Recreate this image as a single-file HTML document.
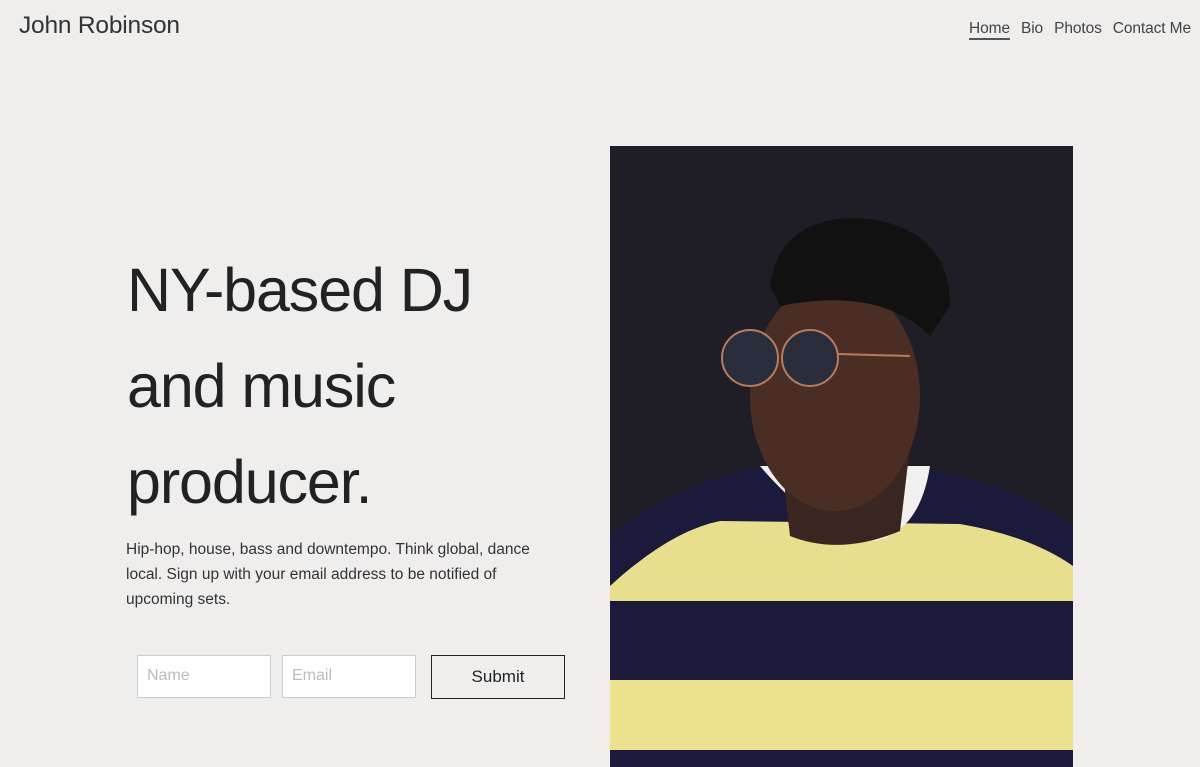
<!DOCTYPE html>
<html><head><meta charset="utf-8"><style>
body{margin:0;width:1200px;height:767px;background:#f0eeed;overflow:hidden;font-family:"Liberation Sans",sans-serif;position:relative;color:#222}
.logo{position:absolute;left:19px;top:12px;font-size:24.5px;color:#333;letter-spacing:-0.2px}
nav{position:absolute;top:20px;right:9px;font-size:15.5px;color:#444;letter-spacing:-0.1px}
nav span{margin-left:11px}
nav .a{border-bottom:2px solid #555;padding-bottom:1px}
h1{position:absolute;left:127px;top:242px;margin:0;font-weight:normal;font-size:61px;line-height:96px;color:#222;letter-spacing:-1.1px}
p{position:absolute;left:126px;top:537px;margin:0;width:430px;font-size:15.5px;line-height:25px;color:#333}
.in{position:absolute;top:655px;width:134px;height:43px;box-sizing:border-box;background:#fff;border:1px solid #ccc;color:#bbb;font-size:16px;padding:11px 9px}
.btn{position:absolute;left:431px;top:655px;width:134px;height:44px;box-sizing:border-box;border:1.5px solid #222;text-align:center;line-height:41px;font-size:17px;color:#222}
svg{position:absolute;left:610px;top:146px}
</style></head><body>
<div class="logo">John Robinson</div>
<nav><span class="a">Home</span><span>Bio</span><span>Photos</span><span>Contact Me</span></nav>
<h1>NY-based DJ<br>and music<br>producer.</h1>
<p>Hip-hop, house, bass and downtempo. Think global, dance local. Sign up with your email address to be notified of upcoming sets.</p>
<div class="in" style="left:137px">Name</div>
<div class="in" style="left:282px">Email</div>
<div class="btn">Submit</div>
<svg width="463" height="621" viewBox="0 0 463 621">
<rect width="463" height="621" fill="#1f1e26"/>
<path d="M0 390 Q60 340 150 320 L300 320 Q400 335 463 380 L463 621 L0 621Z" fill="#1c1a3a"/>
<path d="M0 440 Q60 385 110 375 L350 378 Q420 390 463 420 L463 455 L0 455Z" fill="#e8df8e"/>
<path d="M0 455 L463 455 L463 534 L0 534Z" fill="#1c1a3a"/>
<path d="M0 534 L463 534 L463 604 L0 604Z" fill="#ebe18e"/>
<path d="M150 320 Q210 390 265 395 Q310 385 320 320Z" fill="#f2f0ee"/>
<path d="M170 300 L180 390 Q230 410 290 385 L300 300Z" fill="#3a2620"/>
<ellipse cx="225" cy="250" rx="85" ry="115" fill="#4a2e24"/>
<path d="M160 140 Q170 70 250 72 Q340 80 340 160 L320 190 Q270 140 170 160Z" fill="#111"/>
<circle cx="140" cy="212" r="28" fill="#2a2e3c" stroke="#b87b60" stroke-width="2"/>
<circle cx="200" cy="212" r="28" fill="#2a2e3c" stroke="#b87b60" stroke-width="2"/>
<line x1="228" y1="208" x2="300" y2="210" stroke="#b87b60" stroke-width="2"/>
</svg>
</body></html>
